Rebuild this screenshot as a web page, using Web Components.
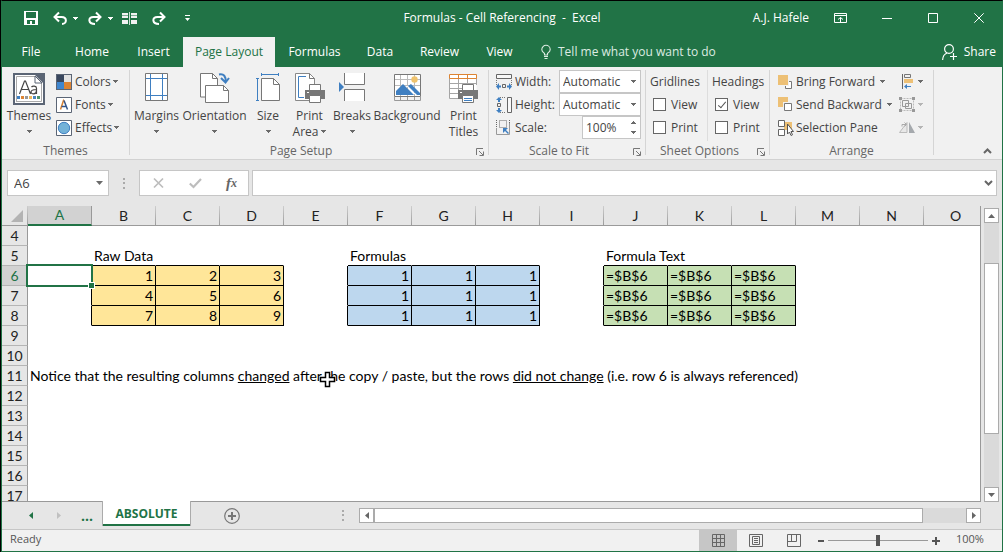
<!DOCTYPE html>
<html lang="en">
<head>
<meta charset="utf-8">
<title>Formulas - Cell Referencing - Excel</title>
<style>
html, body { height: 100%; margin: 0; }
body {
  --green: #217346; --band: #e6e6e6; --panel: #f1f1f1; --line: #ababab; --edge: #c6c6c6;
  --text: #444; --muted: #666;
  --sheet-font: Lato, "Liberation Sans", sans-serif;
  font: 12px/16px "Open Sans", "Noto Sans", sans-serif; color: var(--text); background: #000;
}
</style>
</head>
<body>
<xl-window>
  <xl-title-bar slot="title" user="A.J. Hafele">Formulas - Cell Referencing&nbsp; -&nbsp; Excel</xl-title-bar>
  <xl-tab-bar slot="tabs"></xl-tab-bar>
  <xl-ribbon slot="ribbon"></xl-ribbon>
  <xl-formula-bar slot="formula" cell="A6"></xl-formula-bar>
  <xl-sheet></xl-sheet>
  <xl-sheet-tabs slot="sheets"></xl-sheet-tabs>
  <xl-status-bar slot="status">Ready</xl-status-bar>
</xl-window>

<script>
const BLUE = '#3f7fc1', GREY = '#777', TAN = '#edc075';
const printer = `<path d="M0 6h20v9h-4v-3H4v3H0z" fill="#777"/><path d="M4.500 6V.5h11V6" fill="#fff" stroke="#777"/><path d="M4.500 11.500h11v7h-11z" fill="#fff" stroke="#777"/><path d="M2 8h2v1H2z" fill="#fff"/>`;
// name: [width, height, markup]; drawn on whole-pixel grids
const ICONS = {
  caret: [5, 3, `<path d="M0 0h5v1H4v1H3v1H2V2H1V1H0z" fill="currentColor"/>`],
  caretBig: [7, 4, `<path d="M0 0h7L3.500 4z" fill="currentColor"/>`],
  up: [7, 4, `<path d="M0 4h7L3.500 0z" fill="currentColor"/>`],
  upSmall: [5, 3, `<path d="M0 3h5V2H4V1H3V0H2v1H1v1H0z" fill="currentColor"/>`],
  left: [4, 7, `<path d="M4 0v7L0 3.500z" fill="currentColor"/>`],
  right: [4, 7, `<path d="M0 0v7l4-3.500z" fill="currentColor"/>`],
  save: [14, 14, `<path d="M0 0h14v14H0z" fill="#fff"/><path d="M2 1h10v6H2zM3 9h8v4H8v-3H6v3H3z" fill="#217346"/>`],
  undo: [14, 13, `<path d="M2 5h6.500c6 0 5.500 7 .5 7" stroke="#fff" stroke-width="2" fill="none"/><path d="M6 .5 1.500 5 6 9.500" stroke="#fff" stroke-width="2" fill="none"/>`],
  redo: [14, 13, `<path d="M12 5H5.500c-6 0-5.500 7 1.500 7" stroke="#fff" stroke-width="2" fill="none"/><path d="M8 .5 12.500 5 8 9.500" stroke="#fff" stroke-width="2" fill="none"/>`],
  merge: [15, 13, `<path d="M0 1h6v5H0zM9 1h6v5H9zM0 8h6v4H0zM9 8h6v4H9z" fill="#f1f1f1"/><path d="M0 3h6v1H0zM9 3h6v1H9z" fill="#7dab92"/><path d="M7 0h1v13H7z" fill="#cde0d5"/>`],
  custom: [5, 6, `<path d="M0 0h5v1H0zM0 3h5L2.500 6z" fill="#fff"/>`],
  ribbonOpt: [13, 10, `<path d="M.5.5h12v9H.5zM.5 2.500h12M6.500 9V4.500M4 6.500l2.500-2L9 6.500" stroke="#fff" fill="none"/>`],
  min: [10, 10, `<path d="M0 5.500h10" stroke="#fff"/>`],
  max: [10, 10, `<path d="M.5.5h9v9h-9z" stroke="#fff" fill="none"/>`],
  close: [10, 10, `<path d="m.3.3 9.400 9.400m0-9.400L.3 9.700" stroke="#fff" fill="none"/>`],
  bulb: [10, 14, `<path d="M3.500 10V8.500C2.500 7.500.8 6.500.8 4.500a4.200 4.200 0 0 1 8.400 0c0 2-1.700 3-2.700 4V10zM3 11.500h4M3.500 13.500h3" stroke="#dcebe2" stroke-width="1.100" fill="none"/>`],
  share: [15, 16, `<circle cx="7" cy="5" r="4.400" stroke="#fff" fill="none" stroke-width="1.200"/><path d="M.6 16C.8 12 2.500 10 5 9M11.500 9v7M8 12.500h7" stroke="#fff" stroke-width="1.200" fill="none"/>`],
  themes: [32, 32, `<path d="M1 1h30v30H1z" fill="#fff" stroke="#5b6575" stroke-width="2"/><path d="M3.500 29V3.500H22L28.500 10v18.500h-25" fill="none" stroke="#aaa"/><path d="M22 2h9v9z" fill="#5b6575"/><path d="M22 3v7h7z" fill="#fff" stroke="#5b6575"/><path d="M6.500 21 11.500 8h1l5 13M8.500 16.500h7.500M18.500 14c1-1.200 5-1.500 5 1.200V21M23.500 16.500c-7-.2-6.500 4.300-3 4.300 2 0 3-1.500 3-3" fill="none" stroke="#444" stroke-width="1.200"/><path d="M4 23h3v3H4z" fill="#3f7fc1"/><path d="M8 23h3v3H8z" fill="#dd8433"/><path d="M12 23h3v3h-3z" fill="#999"/><path d="M16 23h3v3h-3z" fill="#edb85c"/><path d="M20 23h3v3h-3z" fill="#4a84c0"/><path d="M24 23h3v3h-3z" fill="#50936a"/>`],
  colors: [16, 16, `<path d="M0 0h16v16H0z" fill="#5b6575"/><path d="M1 1h7v7H1z" fill="#39475e"/><path d="M8 1h7v7H8z" fill="#e3e3e3"/><path d="M1 8h7v7H1z" fill="#3f86cf"/><path d="M8 8h7v7H8z" fill="#dd8433"/>`],
  fonts: [16, 16, `<path d="M.5.5h15v15H.5z" fill="#fff" stroke="#5b6575"/><path d="m4.500 12.500 3-9 .5.500" fill="none" stroke="#d98232" stroke-width="1.500"/><path d="m8 3.500 3.500 9M5.500 9.500h5" fill="none" stroke="#34558b" stroke-width="1.500"/>`],
  effects: [16, 16, `<path d="M.5.5h15v15H.5z" fill="#fff" stroke="#5b6575"/><circle cx="8" cy="8" r="5.700" fill="#73b2d8" stroke="#3f7fc1"/>`],
  margins: [23, 28, `<path d="M.5.5h22v27H.5z" fill="#fff" stroke="#777"/><path d="M5.500 1v26M17.500 1v26M1 5.500h21M1 22.500h21" stroke="${BLUE}"/>`],
  orientation: [30, 30, `<path d="M.5.500h12l5 5V24H.5z" fill="#fff" stroke="#777"/><path d="M12.500.5v5h5" fill="none" stroke="#777"/><path d="M5.500 12.500h18l5 5v12h-23z" fill="#fff" stroke="#777"/><path d="M23.500 12.500v5h5" fill="none" stroke="#777"/><path d="M19 1.500c5-1 7 2 6.500 7M21 5l4.500 4.500L29 5" fill="none" stroke="${BLUE}" stroke-width="2"/>`],
  size: [24, 28, `<path d="M5.500 5.500h12l6 6v16h-18z" fill="#fff" stroke="#777"/><path d="M17.500 5.500v6h6" fill="none" stroke="#777"/><path d="M5 1.500h18M5.500 0v3M22.500 0v3M1.500 5v22M0 5.500h3M0 27.500h3" stroke="${BLUE}" fill="none"/>`],
  printArea: [30, 30, `<path d="M.5.500h14l5 5v22H.5z" fill="#fff" stroke="#888"/><path d="M14.500.5v5h5" fill="none" stroke="#777"/><path d="M11 3.500H3.500v21H9" fill="none" stroke="${BLUE}"/><g transform="translate(10 11)">${printer}</g>`],
  breaks: [26, 28, `<path d="M5.500 0v11.500h20V0M5.500 28V16.500h20V28" fill="#fff" stroke="#777"/><path d="M0 9l5 5-5 5z" fill="${BLUE}"/>`],
  background: [27, 28, `<path d="M.5 1.500h26v22H.5z" fill="#fff" stroke="#777"/><path d="M1 6.500h25M1 12.500h25M6.500 2v21M13.500 2v21M20.500 2v21" stroke="#bbb"/><circle cx="20.500" cy="6.500" r="3.200" fill="#f0c36d"/><path d="M2 22v-4l7-7 11 11z" fill="${BLUE}"/><path d="m14 13 3-2 9 9v2h-3z" fill="${BLUE}"/><path d="m13 13 10 10" stroke="#fff"/><path d="M.5 24v3.500h26V24M6.500 24v3M13.500 24v3M20.500 24v3" fill="none" stroke="#999"/>`],
  printTitles: [30, 30, `<path d="M.5 4.500h27v21H.5z" fill="#fff"/><path d="M.5 5v20.500H10M1 10.500h26M1 15.500h12M1 20.500h9M9.500 6v17M18.500 6v6M27.500 5v7" stroke="#a5a5a5" fill="none"/><path d="M.5 1.500h27v4H.5zM9.500 1.500v4M18.500 1.500v4" fill="#fff" stroke="#dd8433"/><g transform="translate(9 11)">${printer}<path d="M6 14h8v1H6zM6 16h8v1H6z" fill="${BLUE}"/></g>`],
  width: [16, 16, `<path d="M.5.500h15v4H.5z" fill="#f8f8f8" stroke="#666"/><path d="M.5 6v6M15.500 6v6" stroke="#777" stroke-dasharray="1 1"/><path d="M6.500 10.500h3v3h-3z" fill="none" stroke="#666"/><path d="M0 12.500 3 9v2.500h2v2H3V16zM16 12.500 13 9v2.500h-2v2h2V16z" fill="${BLUE}"/>`],
  height: [16, 16, `<path d="M11.500.5h4v15h-4z" fill="#f8f8f8" stroke="#666"/><path d="M4 .5h6M4 15.500h6" stroke="#777" stroke-dasharray="1 1"/><path d="M1.500 6.500h3v3h-3z" fill="none" stroke="#666"/><path d="M3 0 0 3h2v2h2V3h2zM3 16l-3-3h2v-2h2v2h2z" fill="${BLUE}"/>`],
  scale: [15, 15, `<path d="M3.500.500h7v7h-7zM.5 0v11M13.500 0v4" fill="none" stroke="#666" stroke-dasharray="1 1"/><path d="M.5 8v6.500h13V3" fill="none" stroke="#999"/><path d="M7 8h5l-2 2 3 3-1 1-3-3-2 2z" fill="${BLUE}"/>`],
  launcher: [8, 8, `<path d="M.5 7V.5H7M3 3l4 4M7.500 3.500v4h-4" fill="none" stroke="#777"/>`],
  forward: [14, 14, `<path d="M7.500 13.500h6v-7h-6z" fill="#fff" stroke="#777"/><path d="M0 0h11v11H0z" fill="#f1f1f1"/><path d="M0 0h10v10H0z" fill="${TAN}"/>`],
  backward: [15, 15, `<path d="M0 0h10v10H0z" fill="${TAN}"/><path d="M5 5h10v10H5z" fill="#f1f1f1"/><path d="M6.500 6.500h7v7h-7z" fill="#fff" stroke="#777"/>`],
  pane: [16, 16, `<path d="M6 2h8v8H6z" fill="${TAN}"/><path d="M.5.500h6v6h-6zM.5 9.500h6v6h-6z" fill="#fff" stroke="#666"/><path d="M9.500 4v10l2-2 1.500 3.500 1.500-.7L13 11.500h2.500z" fill="#fff" stroke="#555"/>`],
  align: [14, 15, `<g transform="translate(3)"><path d="M.5 0v15" stroke="#666"/><path d="M2.500.5h6v3h-6z" fill="none" stroke="#777"/><path d="M2 5h9v4H2z" fill="${TAN}"/><path d="M2 12.500 5 10v2h4v1H5v2z" fill="${BLUE}"/></g>`],
  group: [16, 15, `<path d="M1.500 1.500h13v12h-13z" fill="none" stroke="#bbb" stroke-dasharray="2 1"/><path d="M3.500 3.500h6v6h-6zM6.500 6.500h6v5h-6z" fill="none" stroke="#999"/><path d="M0 0h3v3H0zM13 0h3v3h-3zM0 12h3v3H0zM13 12h3v3h-3z" fill="#999"/>`],
  rotate: [16, 11, `<path d="M8 .5V10.500H.5z" fill="#e8e8e8" stroke="#bbb"/><path d="M10 0l6 11h-6z" fill="#a5a9ad"/><path d="M3 4.500V2.500h4M5.500.5l2 2-2 2" fill="none" stroke="#aaa"/>`],
  chevUp: [9, 6, `<path d="M1 5l3.500-3.500L8 5" fill="none" stroke="#666" stroke-width="2"/>`],
  chevDown: [9, 6, `<path d="M1 1l3.500 3.500L8 1" fill="none" stroke="#666" stroke-width="2"/>`],
  dots: [2, 11, `<path d="M0 0h2v2H0zM0 4h2v2H0zM0 9h2v2H0z" fill="#aaa"/>`],
  cancel: [11, 10, `<path d="m1 .5 9 9M10 .5l-9 9" stroke="#bdbdbd" stroke-width="1.700"/>`],
  accept: [13, 10, `<path d="M.8 5.500 4.500 9 12 1" fill="none" stroke="#bdbdbd" stroke-width="2.200"/>`],
  plus: [16, 16, `<circle cx="8" cy="8" r="7.300" fill="none" stroke="#777" stroke-width="1.200"/><path d="M8 4v8M4 8h8" stroke="#777" stroke-width="2"/>`],
  normal: [13, 13, `<path d="M.5.500h12v12H.5zM4.500 0v13M8.500 0v13M0 4.500h13M0 8.500h13" fill="none" stroke="#666"/>`],
  layout: [14, 13, `<path d="M.5.500h13v12H.5zM3.500 2.500h7v8h-7zM5 4.500h4M5 6.500h4M5 8.500h4" fill="none" stroke="#666"/>`],
  pageBreak: [14, 13, `<path d="M.5.500h13v12H.5zM4.500 0v7.500M9.500 0v7.500H0" fill="none" stroke="#666"/>`],
  zoomOut: [6, 2, `<path d="M0 0h6v2H0z" fill="#555"/>`],
  zoomIn: [8, 8, `<path d="M3 0h2v3h3v2H5v3H3V5H0V3h3z" fill="#555"/>`],
  corner: [12, 12, `<path d="M12 0v12H0z" fill="#b3b3b3"/>`],
  cross: [15, 15, `<path d="M5.500.500h4v5h5v4h-5v5h-4v-5h-5v-4h5z" fill="#fff" stroke="#000" stroke-width="1.500"/>`]
};

const RESET = `<style>
  *, *::before { box-sizing: border-box; }
  button, input, select { font: inherit; color: inherit; background: none; border: 0; padding: 0; margin: 0; border-radius: 0; appearance: none; }
  a { color: inherit; text-decoration: none; }
</style>`;

// Registers an element whose shadow root is a clone of the given template markup.
function define(tag, markup, setup) {
  const tpl = document.createElement('template');
  tpl.innerHTML = RESET + markup;
  customElements.define(tag, class extends HTMLElement {
    constructor() { super(); this.attachShadow({ mode: 'open' }).append(tpl.content.cloneNode(true)); }
    connectedCallback() { if (setup && !this.ready) { this.ready = true; setup(this, this.shadowRoot); } }
  });
}

define('xl-icon', `<style>:host { display: inline-flex; flex: none; color: var(--glyph, inherit); } svg { display: block; overflow: visible; }</style>`, (host, root) => {
  const [w, h, body] = ICONS[host.getAttribute('name')];
  root.innerHTML += `<svg width="${w}" height="${h}" viewBox="0 0 ${w} ${h}" aria-hidden="true">${body}</svg>`;
});

define('xl-window', `<style>
  :host { display: flex; flex-direction: column; height: 100vh; box-sizing: border-box; border: 1px solid var(--green); border-top-color: #000; margin-left: 1px; background: var(--band); overflow: hidden; }
  main { flex: 1; min-height: 0; display: flex; }
  main ::slotted(*) { flex: 1; min-width: 0; }
</style>
<slot name="title"></slot><slot name="tabs"></slot><slot name="ribbon"></slot><slot name="formula"></slot>
<main><slot></slot></main><slot name="sheets"></slot><slot name="status"></slot>`);

define('xl-title-bar', `<style>
  :host { display: grid; grid-template-columns: 1fr auto 1fr; align-items: center; height: 36px; padding-bottom: 2px; box-sizing: border-box; background: var(--green); color: #fff; }
  .quick, .win { display: flex; align-items: center; }
  .quick { padding-left: 22px; }
  .quick button { display: flex; align-items: center; }
  .split { gap: 6px; }
  .win { justify-content: flex-end; }
  .win span { margin-right: 12px; }
  .win button { width: 46px; height: 30px; display: flex; align-items: center; justify-content: center; }
  .win .opt { width: 38px; margin-right: 5px; }
</style>
<div class="quick">
  <button aria-label="Save" style="width:29px"><xl-icon name="save"></xl-icon></button>
  <button aria-label="Undo" class="split" style="width:35px"><xl-icon name="undo"></xl-icon><xl-icon name="caret"></xl-icon></button>
  <button aria-label="Redo" class="split" style="width:34px"><xl-icon name="redo"></xl-icon><xl-icon name="caret"></xl-icon></button>
  <button aria-label="Merge" style="width:30px"><xl-icon name="merge"></xl-icon></button>
  <button aria-label="Repeat" style="width:33px"><xl-icon name="redo"></xl-icon></button>
  <button aria-label="Customize toolbar"><xl-icon name="custom"></xl-icon></button>
</div>
<slot></slot>
<div class="win">
  <span></span>
  <button class="opt" aria-label="Ribbon display options"><xl-icon name="ribbonOpt"></xl-icon></button>
  <button aria-label="Minimize"><xl-icon name="min"></xl-icon></button>
  <button aria-label="Maximize"><xl-icon name="max"></xl-icon></button>
  <button aria-label="Close"><xl-icon name="close"></xl-icon></button>
</div>`, (host, root) => { root.querySelector('span').textContent = host.getAttribute('user'); });

define('xl-tab-bar', `<style>
  :host { display: flex; height: 30px; background: var(--green); color: #fff; }
  nav { display: flex; }
  a { display: flex; align-items: center; justify-content: center; white-space: nowrap; }
  a[aria-current] { background: var(--panel); color: var(--green); }
  .tell { flex: 1; display: flex; align-items: center; gap: 7px; padding-left: 15px; color: #dcebe2; }
  .share { display: flex; align-items: center; gap: 7px; padding-right: 6px; }
</style>
<nav>
  <a href="#file" style="width:58px">File</a><a href="#home" style="width:64px">Home</a><a href="#insert" style="width:59px">Insert</a>
  <a href="#layout" style="width:92px" aria-current="page">Page Layout</a><a href="#formulas" style="width:79px">Formulas</a>
  <a href="#data" style="width:52px">Data</a><a href="#review" style="width:67px">Review</a><a href="#view" style="width:53px">View</a>
</nav>
<button class="tell"><xl-icon name="bulb"></xl-icon>Tell me what you want to do</button>
<button class="share"><xl-icon name="share"></xl-icon>Share</button>`);

define('xl-group', `<style>
  :host { display: flex; flex-direction: column; margin: 3px 0 4px; border-right: 1px solid #d5d5d5; box-sizing: border-box; }
  .body { display: flex; flex: none; height: 71px; }
  footer { display: flex; flex: none; align-items: center; color: var(--muted); height: 20px; }
  footer span { flex: 1; text-align: center; white-space: nowrap; }
  footer button { width: 16px; padding: 2px 4px 0; display: flex; }
  :host([plain]) footer button { display: none; }
</style>
<div class="body"><slot></slot></div>
<footer><span></span><button aria-label="More options"><xl-icon name="launcher"></xl-icon></button></footer>`,
(host, root) => { root.querySelector('span').textContent = host.getAttribute('label'); });

define('xl-big-button', `<style>
  :host { display: flex; justify-content: center; }
  button { display: flex; flex-direction: column; align-items: center; white-space: nowrap; padding-top: 2px; }
  .pic { height: 36px; display: flex; align-items: flex-start; padding-top: 1px; }
  .second { display: flex; align-items: center; gap: 3px; height: 15px; }
  .first { height: 16px; }
</style>
<button><span class="pic"></span><span class="first"></span><span class="second"></span></button>`, (host, root) => {
  root.querySelector('.pic').innerHTML = `<xl-icon name="${host.getAttribute('icon')}"></xl-icon>`;
  root.querySelector('.first').textContent = host.getAttribute('text');
  root.querySelector('.second').innerHTML = (host.getAttribute('more') || '') + (host.hasAttribute('menu') ? '<xl-icon name="caret"></xl-icon>' : '');
});

define('xl-row-button', `<style>
  :host { display: block; }
  button { display: flex; align-items: center; height: 23px; gap: var(--gap, 3px); white-space: nowrap; }
  .pic { display: flex; width: 16px; }
  .label { display: flex; align-items: center; gap: var(--caret-gap, 2px); }
  :host([disabled]) { --glyph: #b5b5b5; }
</style>
<button><span class="pic"></span><span class="label"></span></button>`, (host, root) => {
  const text = host.getAttribute('text') || '';
  root.querySelector('button').setAttribute('aria-label', text || host.getAttribute('icon'));
  root.querySelector('.pic').innerHTML = `<xl-icon name="${host.getAttribute('icon')}"></xl-icon>`;
  root.querySelector('.label').innerHTML = text + (host.hasAttribute('menu') ? '<xl-icon name="caret"></xl-icon>' : '');
});

define('xl-check', `<style>
  :host { display: block; }
  label { display: flex; align-items: center; gap: 5px; height: 23px; }
  input { width: 13px; height: 13px; border: 1px solid #666; background: #fff; display: grid; place-items: center; }
  input:checked::before { content: ""; width: 4px; height: 8px; border: solid #555; border-width: 0 1px 1px 0; rotate: 40deg; margin-top: -2px; }
</style>
<label><input type="checkbox"><slot></slot></label>`, (host, root) => { root.querySelector('input').checked = host.hasAttribute('checked'); });

define('xl-ribbon', `<style>
  :host { display: flex; height: 93px; box-sizing: border-box; background: var(--panel); border-bottom: 1px solid #d2d2d2; --glyph: #6a6a6a; }
  .stack { display: flex; flex-direction: column; }
  .fit { display: grid; grid-template-columns: 19px 44px 82px; grid-auto-rows: 23px; align-items: center; padding-left: 7px; }
  .fit label { white-space: nowrap; }
  .combo { display: flex; align-items: center; height: 23px; border: 1px solid var(--edge); background: #fff; position: relative; }
  .combo select { width: 100%; height: 100%; padding-left: 3px; }
  .combo > xl-icon { position: absolute; right: 4px; pointer-events: none; }
  .spin { width: 59px; justify-self: end; justify-content: space-between; }
  .spin input { width: 36px; padding-left: 3px; }
  .spin div { display: flex; flex-direction: column; gap: 7px; padding-right: 4px; }
  .spin button { display: flex; height: 3px; }
  .opts { padding: 0 0 0 4px; }
  h3 { font: inherit; height: 23px; line-height: 23px; margin: 0; }
  .opts xl-check { padding-left: 3px; }
  .opts + .opts { border-left: 1px solid #ddd; padding-left: 4px; }
  .end { flex: 1; display: flex; justify-content: flex-end; align-items: flex-end; padding: 0 10px 5px; }
  .end button { display: flex; }
</style>
<xl-group label="Themes" plain style="width:128px">
  <xl-big-button icon="themes" text="Themes" menu style="width:54px"></xl-big-button>
  <div class="stack">
    <xl-row-button icon="colors" text="Colors" menu></xl-row-button>
    <xl-row-button icon="fonts" text="Fonts" menu></xl-row-button>
    <xl-row-button icon="effects" text="Effects" menu></xl-row-button>
  </div>
</xl-group>
<xl-group label="Page Setup" style="width:359px">
  <xl-big-button icon="margins" text="Margins" menu style="width:53px"></xl-big-button>
  <xl-big-button icon="orientation" text="Orientation" menu style="width:63px"></xl-big-button>
  <xl-big-button icon="size" text="Size" menu style="width:44px"></xl-big-button>
  <xl-big-button icon="printArea" text="Print" more="Area" menu style="width:39px"></xl-big-button>
  <xl-big-button icon="breaks" text="Breaks" menu style="width:46px"></xl-big-button>
  <xl-big-button icon="background" text="Background" style="width:64px"></xl-big-button>
  <xl-big-button icon="printTitles" text="Print" more="Titles" style="width:49px"></xl-big-button>
</xl-group>
<xl-group label="Scale to Fit" style="width:157px">
  <div class="fit">
    <xl-icon name="width"></xl-icon><label for="w">Width:</label>
    <div class="combo"><select id="w"><option>Automatic</option></select><xl-icon name="caret"></xl-icon></div>
    <xl-icon name="height"></xl-icon><label for="h">Height:</label>
    <div class="combo"><select id="h"><option>Automatic</option></select><xl-icon name="caret"></xl-icon></div>
    <xl-icon name="scale"></xl-icon><label for="s">Scale:</label>
    <div class="combo spin"><input id="s" value="100%"><div><button aria-label="Increase"><xl-icon name="upSmall"></xl-icon></button><button aria-label="Decrease"><xl-icon name="caret"></xl-icon></button></div></div>
  </div>
</xl-group>
<xl-group label="Sheet Options" style="width:124px">
  <div class="opts" style="width:61px"><h3>Gridlines</h3><xl-check>View</xl-check><xl-check>Print</xl-check></div>
  <div class="opts"><h3>Headings</h3><xl-check checked>View</xl-check><xl-check>Print</xl-check></div>
</xl-group>
<xl-group label="Arrange" plain style="width:164px">
  <div class="stack" style="padding-left:8px;width:129px;--gap:2px;--caret-gap:5px">
    <xl-row-button icon="forward" text="Bring Forward" menu></xl-row-button>
    <xl-row-button icon="backward" text="Send Backward" menu></xl-row-button>
    <xl-row-button icon="pane" text="Selection Pane"></xl-row-button>
  </div>
  <div class="stack">
    <xl-row-button icon="align" menu></xl-row-button>
    <xl-row-button icon="group" menu disabled></xl-row-button>
    <xl-row-button icon="rotate" menu disabled></xl-row-button>
  </div>
</xl-group>
<div class="end"><button aria-label="Collapse the ribbon"><xl-icon name="chevUp"></xl-icon></button></div>`);

define('xl-formula-bar', `<style>
  :host { display: flex; align-items: center; height: 46px; box-sizing: border-box; padding: 0 5px; --glyph: #6a6a6a; }
  .box { display: flex; align-items: center; height: 26px; border: 1px solid var(--edge); background: #fff; }
  .name { width: 102px; padding: 0 6px; font-size: 13px; }
  .name input { width: 82px; }
  .dots { width: 30px; display: flex; justify-content: center; }
  .acts { width: 110px; justify-content: space-between; padding: 0 11px 0 13px; }
  button { display: flex; }
  .fx { font: italic 700 15px/20px "Liberation Serif", serif; color: #666; }
  .fx small { font-size: 12px; }
  .entry { flex: 1; margin-left: 3px; padding: 0 3px; }
  .entry input { flex: 1; min-width: 0; }
</style>
<div class="box name"><input aria-label="Name box"><button aria-label="Names"><xl-icon name="caretBig"></xl-icon></button></div>
<div class="dots"><xl-icon name="dots"></xl-icon></div>
<div class="box acts"><button aria-label="Cancel"><xl-icon name="cancel"></xl-icon></button><button aria-label="Enter"><xl-icon name="accept"></xl-icon></button><button class="fx" aria-label="Insert function">f<small>x</small></button></div>
<div class="box entry"><input aria-label="Formula"><button aria-label="Expand formula bar"><xl-icon name="chevDown"></xl-icon></button></div>`,
(host, root) => { root.querySelector('input').value = host.getAttribute('cell'); });

define('xl-scrollbar', `<style>
  :host { display: flex; background: #dadada; }
  :host([vertical]) { flex-direction: column; width: 15px; }
  :host(:not([vertical])) { height: 15px; }
  button { width: 15px; height: 15px; flex: none; display: flex; align-items: center; justify-content: center; background: #fff; border: 1px solid var(--line); color: #666; }
  .thumb { background: #fff; border: 1px solid var(--line); }
</style>
<button aria-label="Back"></button><i class="before"></i><i class="thumb"></i><i class="after"></i><button aria-label="Forward"></button>`, (host, root) => {
  const names = host.hasAttribute('vertical') ? ['up', 'caretBig'] : ['left', 'right'];
  root.querySelectorAll('button').forEach((b, i) => b.innerHTML = `<xl-icon name="${names[i]}"></xl-icon>`);
  host.getAttribute('parts').split(' ').forEach((n, i) => root.querySelectorAll('i')[i].style.flex = `${n} 1 0px`);
});

define('xl-sheet', `<style>
  :host { display: flex; }
  .view { flex: 1; min-width: 0; overflow: hidden; position: relative; background: #fff; border: solid #999; border-width: 0 1px 1px 0; }
  table { table-layout: fixed; width: 986px; border-spacing: 0; font: 14px/18px var(--sheet-font); color: #000; }
  td, th { height: 20px; padding: 1px 2px 0; border: solid transparent; border-width: 0 1px 1px 0; white-space: nowrap; font-weight: 400; position: relative; }
  th { background: var(--band); color: #222; text-align: center; padding-left: 0; padding-right: 0; }
  thead th { border-bottom-color: #999; border-image: linear-gradient(#d0d0d0, #999) 1; }
  tbody th { border-color: #999; border-bottom-color: #b5b5b5; }
  .on { background: #d2d2d2; color: var(--green); }
  thead .on { border-image: none; border-bottom: 2px solid var(--green); border-right-color: #999; padding: 0; }
  .num { text-align: right; }
  .Y { background: #ffe699; } .B { background: #bdd7ee; } .G { background: #c6e0b4; }
  .r { border-right-color: #000; } .b { border-bottom-color: #000; }
  .corner { display: flex; justify-content: flex-end; padding: 0 4px 0 0; }
  .pick { position: absolute; inset: -2px; border: 2px solid var(--green); z-index: 1; }
  .pick::after { content: ""; position: absolute; right: -3px; bottom: -3px; width: 5px; height: 5px; background: var(--green); outline: 1px solid #fff; }
  .mouse { position: absolute; left: 318px; top: 166px; }
  xl-scrollbar { margin: 2px 3px 0; }
</style>
<div class="view"><table><colgroup><col style="width:26px"></colgroup><thead><tr><th><span class="corner"><xl-icon name="corner"></xl-icon></span></th></tr></thead><tbody></tbody></table>
<xl-icon class="mouse" name="cross"></xl-icon></div>
<xl-scrollbar vertical parts="40 171 54"></xl-scrollbar>`, (host, root) => {
  const cols = [...'ABCDEFGHIJKLMNO'];
  const blocks = { B: ['Y', (r, c) => (r - 6) * 3 + c + 1], F: ['B', () => 1], J: ['G', () => '=$B$6'] };
  const text = {
    B5: 'Raw Data', F5: 'Formulas', J5: 'Formula Text',
    A11: 'Notice that the resulting columns <u>changed</u> after the copy / paste, but the rows <u>did not change</u> (i.e. row 6 is always referenced)'
  };
  const head = root.querySelector('thead tr'), body = root.querySelector('tbody'), group = root.querySelector('colgroup');
  cols.forEach(c => {
    group.insertAdjacentHTML('beforeend', '<col style="width:64px">');
    head.insertAdjacentHTML('beforeend', `<th scope="col"${c === 'A' ? ' class="on"' : ''}>${c}</th>`);
  });
  for (let r = 4; r <= 17; r++) {
    let row = `<th scope="row"${r === 6 ? ' class="on"' : ''}>${r}</th>`;
    cols.forEach((c, i) => {
      const start = ['B', 'F', 'J'].find(s => i >= cols.indexOf(s) && i < cols.indexOf(s) + 3);
      const beside = ['A', 'E', 'I'].includes(c);
      const inRows = r >= 6 && r <= 8;
      const cls = [];
      let value = text[c + r] || '';
      if (start && inRows) {
        const [fill, fn] = blocks[start];
        value = fn(r, i - cols.indexOf(start));
        cls.push(fill, 'r', 'b');
        if (typeof value === 'number') cls.push('num');
      } else if (start && r === 5) cls.push('b');
      else if (beside && inRows) cls.push('r');
      if (c + r === 'A6') value = '<i class="pick"></i>';
      row += `<td class="${cls.join(' ')}">${value}</td>`;
    });
    body.insertAdjacentHTML('beforeend', `<tr>${row}</tr>`);
  }
});

define('xl-sheet-tabs', `<style>
  :host { display: flex; align-items: center; height: 28px; box-sizing: border-box; border-bottom: 1px solid var(--edge); color: var(--green); }
  .nav { display: flex; align-items: center; align-self: stretch; width: 100px; padding-left: 27px; font-weight: 700; }
  .nav button { display: flex; width: 28px; }
  .nav .more { width: auto; margin-left: -4px; font-size: 14px; }
  a { align-self: flex-start; margin-top: -1px; height: 25px; width: 89px; background: #fff; border: solid var(--line); border-width: 0 1px; box-shadow: inset 0 -2px var(--green); text-align: center; line-height: 25px; font-weight: 700; position: relative; }
  .add { display: flex; margin-left: 33px; }
  .grip { margin: 0 15px 0 102px; }
  xl-scrollbar { flex: 1; margin-right: 21px; }
</style>
<div class="nav"><button aria-label="Previous sheets"><xl-icon name="left"></xl-icon></button><button aria-label="Next sheets" style="color:#c0c0c0"><xl-icon name="right"></xl-icon></button><button class="more" aria-label="More sheets">...</button></div>
<a href="#absolute" aria-current="page">ABSOLUTE</a>
<button class="add" aria-label="New sheet"><xl-icon name="plus"></xl-icon></button>
<xl-icon class="grip" name="dots"></xl-icon>
<xl-scrollbar parts="0 549 43"></xl-scrollbar>`);

define('xl-status-bar', `<style>
  :host { display: flex; align-items: center; height: 21px; background: var(--panel); font-size: 11px; color: #555; padding-left: 8px; }
  .state { flex: 1; padding-bottom: 3px; }
  button { display: flex; align-items: center; justify-content: center; height: 100%; width: 38px; }
  .on { background: #c6c6c6; }
  .zoom { display: flex; align-items: center; gap: 4px; padding-left: 5px; }
  .zoom button { width: auto; }
  input { width: 100px; height: 12px; background: linear-gradient(#999, #999) center / 100% 1px no-repeat; }
  input::-webkit-slider-thumb { appearance: none; width: 4px; height: 11px; background: #555; }
  output { width: 62px; padding: 0 0 3px 16px; }
</style>
<span class="state"><slot></slot></span>
<button class="on" aria-label="Normal"><xl-icon name="normal"></xl-icon></button>
<button aria-label="Page layout"><xl-icon name="layout"></xl-icon></button>
<button aria-label="Page break preview"><xl-icon name="pageBreak"></xl-icon></button>
<div class="zoom"><button aria-label="Zoom out"><xl-icon name="zoomOut"></xl-icon></button><input type="range" aria-label="Zoom" min="0" max="200" value="100"><button aria-label="Zoom in"><xl-icon name="zoomIn"></xl-icon></button></div>
<output>100%</output>`);
</script>
</body>
</html>
